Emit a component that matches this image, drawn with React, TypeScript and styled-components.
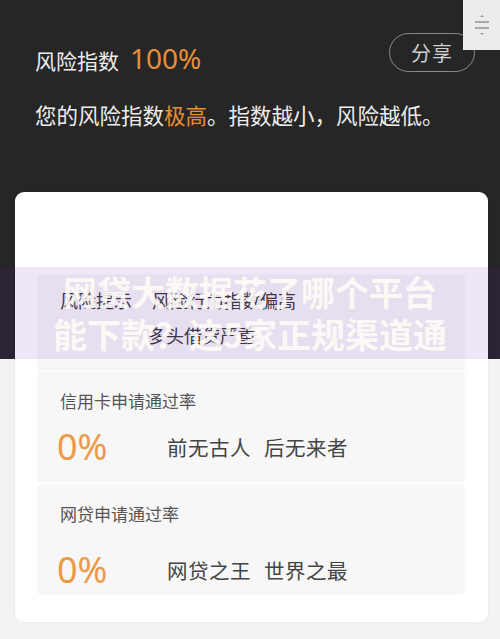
import React from 'react';
import styled, { createGlobalStyle } from 'styled-components';

const GlobalStyle = createGlobalStyle`
  html, body { margin: 0; padding: 0; }
  body {
    font-family: "Noto Sans CJK SC", "Noto Sans", sans-serif;
    background: #f3f3f3;
  }
`;

const ORANGE = '#ea8e33';

type RateItem = {
  title: string;
  slogan: [string, string];
  top: number;
  valueTop: number;
  height: number;
};

const rates: RateItem[] = [
  { title: '信用卡申请通过率', slogan: ['前无古人', '后无来者'], top: 4, valueTop: 14, height: 108 },
  { title: '网贷申请通过率', slogan: ['网贷之王', '世界之最'], top: 5, valueTop: 24, height: 107 },
];

const Page = styled.div`
  position: relative;
  width: 500px;
  height: 639px;
  overflow: hidden;
  background: linear-gradient(#262626 0, #262626 359px, #f3f3f3 359px);
`;

const Header = styled.div`
  height: 192px;
  padding: 0 0 0 35px;
  box-sizing: border-box;
  display: flex;
  flex-direction: column;
`;

const TitleRow = styled.div`
  display: flex;
  align-items: baseline;
  margin-top: 39px;
  height: 38px;
`;

const TitleLabel = styled.span`
  color: #ededed;
  font-size: 21px;
`;

const TitleValue = styled.span`
  color: ${ORANGE};
  font-size: 28px;
  margin-left: 11px;
  font-family: "Noto Sans", "Open Sans", sans-serif;
`;

const ShareButton = styled.button`
  position: absolute;
  left: 389px;
  top: 33px;
  width: 86px;
  height: 39px;
  border: 1.5px solid #8a8a8a;
  border-radius: 20px;
  background: transparent;
  color: #cfcfcf;
  font-family: inherit;
  font-size: 20px;
  padding: 0;
  letter-spacing: 1px;
`;

const ScrollWidget = styled.div`
  position: absolute;
  right: 0;
  top: 0;
  width: 37px;
  height: 50px;
  background: #ececec;
  display: flex;
  align-items: center;
  justify-content: center;
`;

const Desc = styled.p`
  margin: 22px 0 0;
  color: #ededed;
  font-size: 21.5px;
`;

const Hl = styled.span`
  color: ${ORANGE};
`;

const Card = styled.div`
  margin: 0 12px 0 15px;
  background: #fff;
  border-radius: 9px;
  padding: 83px 24px 30px 23px;
  box-shadow: 0 0 4px rgba(0, 0, 0, 0.06);
`;

const Item = styled.div<{ $h: number; $mt: number; $pt: number }>`
  height: ${(p) => p.$h}px;
  margin-top: ${(p) => p.$mt}px;
  background: #f7f7f7;
  box-shadow: 0 1px 3px rgba(0, 0, 0, 0.08);
  box-sizing: border-box;
  padding: ${(p) => p.$pt}px 0 0 22px;
`;

const RiskLine = styled.div<{ $indent: number }>`
  color: #3a3a3a;
  font-size: 18px;
  line-height: 35px;
  padding-left: ${(p) => p.$indent}px;
  display: flex;
  gap: 20px;
`;

const ItemTitle = styled.div`
  color: #555;
  font-size: 17px;
  line-height: 24px;
`;

const ValueRow = styled.div<{ $mt: number }>`
  display: flex;
  align-items: center;
  margin-top: ${(p) => p.$mt}px;
  margin-left: -3px;
`;

const Percent = styled.span`
  color: #eb9a45;
  font-size: 36px;
  line-height: 40px;
  width: 110px;
  font-family: "Noto Sans", "Open Sans", sans-serif;
`;

const Slogan = styled.span`
  display: flex;
  gap: 13px;
  color: #444;
  font-size: 20.5px;
  letter-spacing: 0.5px;
`;

const Watermark = styled.div`
  position: absolute;
  left: 0;
  top: 267px;
  width: 500px;
  height: 92px;
  background: rgba(95, 20, 185, 0.1);
  display: flex;
  flex-direction: column;
  align-items: center;
  justify-content: center;
  color: rgba(255, 252, 246, 0.9);
  font-weight: 700;
  font-size: 34px;
  line-height: 42px;
  pointer-events: none;
`;

const WaterLine = styled.div`
  white-space: nowrap;
`;

const ScrollIcon = () => (
  <svg width="20" height="26" viewBox="0 0 20 26">
    <path d="M8 5 L10 3 L12 5 Z" fill="#999" />
    <line x1="3" y1="10" x2="17" y2="10" stroke="#999" strokeWidth="1.6" />
    <line x1="3" y1="16" x2="17" y2="16" stroke="#999" strokeWidth="1.6" />
    <path d="M8 21 L10 23 L12 21 Z" fill="#999" />
  </svg>
);

export default function App() {
  return (
    <>
      <GlobalStyle />
      <Page>
        <Header>
          <TitleRow>
            <TitleLabel>风险指数</TitleLabel>
            <TitleValue>100%</TitleValue>
          </TitleRow>
          <Desc>
            您的风险指数<Hl>极高</Hl>。指数越小，风险越低。
          </Desc>
        </Header>
        <ShareButton>分享</ShareButton>
        <ScrollWidget>
          <ScrollIcon />
        </ScrollWidget>
        <Card>
          <Item $h={93} $mt={0} $pt={8}>
            <RiskLine $indent={0}>
              <span>风险提示</span>
              <span>风险行为指数偏高</span>
            </RiskLine>
            <RiskLine $indent={88}>多头借贷严重</RiskLine>
          </Item>
          {rates.map((r) => (
            <Item key={r.title} $h={r.height} $mt={r.top} $pt={17}>
              <ItemTitle>{r.title}</ItemTitle>
              <ValueRow $mt={r.valueTop}>
                <Percent>0%</Percent>
                <Slogan>
                  <span>{r.slogan[0]}</span>
                  <span>{r.slogan[1]}</span>
                </Slogan>
              </ValueRow>
            </Item>
          ))}
        </Card>
        <Watermark>
          <WaterLine>网贷大数据花了哪个平台</WaterLine>
          <WaterLine>能下款？这5家正规渠道通</WaterLine>
        </Watermark>
      </Page>
    </>
  );
}
